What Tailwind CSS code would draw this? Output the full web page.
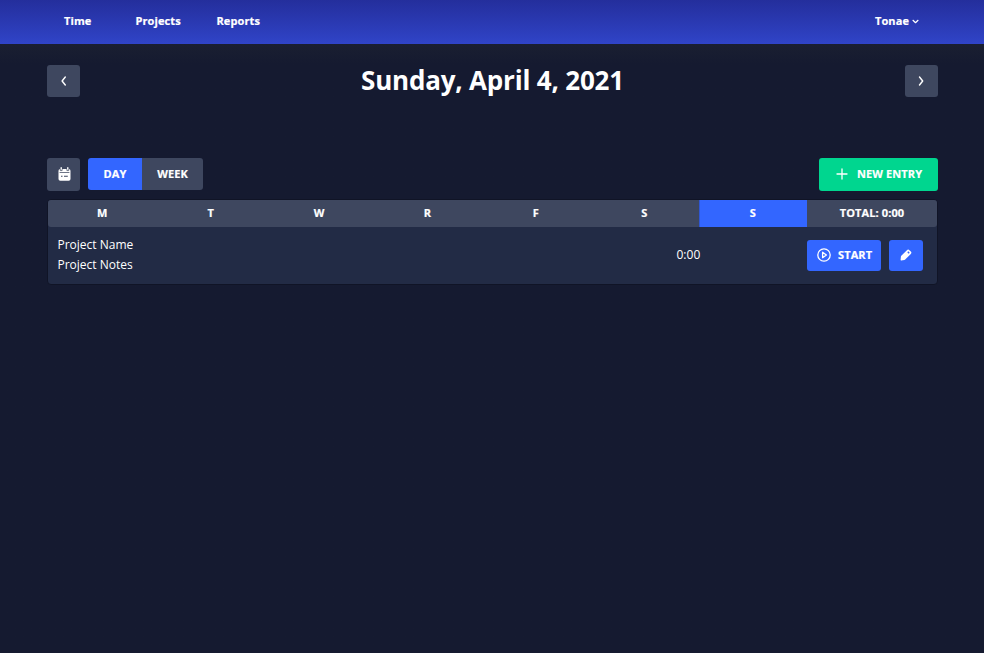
<!DOCTYPE html>
<html lang="en">
<head>
<meta charset="utf-8">
<title>Time</title>
<script src="https://cdn.jsdelivr.net/npm/@tailwindcss/browser@4"></script>
</head>
<body class="h-screen overflow-hidden bg-[#151a30] font-['Open_Sans',sans-serif] text-white">
<nav class="flex h-[44px] items-center justify-between bg-linear-to-b from-[#242e9c] to-[#3044c8] pr-[65px] pl-[64px] pb-[2px] text-[11px] leading-4 font-bold tracking-[0.1px] [-webkit-text-stroke:0.2px_white]">
  <div class="flex">
    <a class="w-[71.5px]">Time</a>
    <a class="w-[81px]">Projects</a>
    <a>Reports</a>
  </div>
  <div class="flex items-center gap-[3px]">Tonae
    <svg class="mt-px h-[7px] w-[7px]" viewBox="0 0 7 7" fill="none" stroke="white" stroke-width="1.2" stroke-linecap="round" stroke-linejoin="round"><path d="M1 2.3 3.5 4.7 6 2.3"/></svg>
  </div>
</nav>
<div class="h-[609px] bg-linear-to-b from-[#1a1f31] to-[#151a30] to-[20px] pt-[21px] pr-[46px] pl-[47px]">
  <div class="flex h-8 items-center justify-between">
    <button class="flex h-8 w-[33px] items-center justify-center rounded-[3px] bg-[#3e475f]">
      <svg class="h-3 w-3" viewBox="0 0 12 12" fill="none" stroke="white" stroke-width="1.4" stroke-linecap="round" stroke-linejoin="round"><path d="M7.3 2 4.1 6l3.2 4"/></svg>
    </button>
    <h1 class="pb-[2px] text-[26px] leading-8 font-bold tracking-[-0.19px]">Sunday, April 4, 2021</h1>
    <button class="flex h-8 w-[33px] items-center justify-center rounded-[3px] bg-[#3e475f]">
      <svg class="h-3 w-3" viewBox="0 0 12 12" fill="none" stroke="white" stroke-width="1.4" stroke-linecap="round" stroke-linejoin="round"><path d="M4.5 2l3.2 4-3.2 4"/></svg>
    </button>
  </div>
  <div class="mt-[61px] flex h-[33px] items-start text-[11px] leading-4 font-bold tracking-[0.1px] [-webkit-text-stroke:0.2px_white]">
    <button class="flex h-[33px] w-[33px] items-center justify-center rounded-[3px] bg-[#3e475f] pb-px pl-px">
      <svg class="h-[14px] w-[13px]" viewBox="0 0 13 14"><path fill="white" fill-rule="evenodd" d="M.5 3.8Q.5 2 2.3 2H2.5V.8Q2.5 .1 3.2 .1T3.9 .8V2H9.1V.8Q9.1 .1 9.8 .1T10.5 .8V2H10.7Q12.5 2 12.5 3.8V12Q12.5 13.8 10.7 13.8H2.3Q.5 13.8 .5 12ZM1.6 5.2V6H11.4V5.2Z"/><path stroke="#3e475f" stroke-width="1.1" d="M3 9.3H4.5M6 9.3H9.8"/><path stroke="#3e475f" stroke-width=".7" d="M2.3 2v1.6H4.1V2M8.9 2v1.6h1.8V2" fill="none"/></svg>
    </button>
    <div class="ml-2 flex h-8 overflow-hidden rounded-[3px]">
      <button class="w-[54px] bg-[#3366ff]">DAY</button>
      <button class="w-[61px] bg-[#3e475f]">WEEK</button>
    </div>
    <button class="ml-auto flex h-[33px] w-[119px] items-center rounded-[3px] bg-[#00d68f] pb-px pl-[17px]">
      <svg class="mr-[9px] h-3 w-3" viewBox="0 0 12 12" stroke="white" stroke-width="1.3" stroke-linecap="round"><path d="M6 1v10M1 6h10"/></svg>
      NEW ENTRY
    </button>
  </div>
  <div class="mt-[8px] w-[891px] rounded-[4px] border border-[#101426] bg-[#222b45]">
    <div class="flex h-[27px] overflow-hidden rounded-[3px] bg-[#3e475f] text-center text-[11px] leading-[25px] font-bold tracking-[0.1px] [-webkit-text-stroke:0.2px_white]">
      <div class="grid w-[759px] grid-cols-7">
        <div>M</div><div>T</div><div>W</div><div>R</div><div>F</div><div>S</div>
        <div class="border-l border-[#3057d2] bg-[#3366ff] pr-px">S</div>
      </div>
      <div class="w-[130px]">TOTAL: 0:00</div>
    </div>
    <div class="flex h-[57px] items-center pr-[14px] pl-[9.5px] text-[12px] leading-5">
      <div class="w-[619px] pb-[2px]"><div>Project Name</div><div>Project Notes</div></div>
      <div class="pb-[2px]">0:00</div>
      <button class="ml-auto flex h-[31px] w-[74px] items-center rounded-[3px] bg-[#3366ff] pl-[10px] text-[11px] font-bold tracking-[0.1px] [-webkit-text-stroke:0.2px_white]">
        <svg class="mr-[7px] mb-px h-[14px] w-[14px]" viewBox="0 0 14 14" fill="none" stroke="white" stroke-width="1.3" stroke-linejoin="round"><circle cx="7" cy="7" r="6.2"/><path d="M5.6 4.3v5.4L9.4 7z"/></svg><span class="pb-[2px]">START</span>
      </button>
      <button class="ml-2 flex h-[31px] w-[34px] items-center justify-center rounded-[3px] bg-[#3366ff] pb-px">
        <svg class="h-[12px] w-[12px]" viewBox="0 0 12 12"><path fill="white" fill-rule="evenodd" d="M.6 10.8 .9 7.6Q1 7.1 1.3 6.8L6.9 1.2Q8.2 0 9.4 1.2L10.8 2.6Q12 3.8 10.8 5L5.2 10.6Q4.9 10.9 4.4 11L1.2 11.4Q.5 11.5.6 10.8ZM8.3 2.3 7.3 3.3 8.7 4.7 9.7 3.7Z"/></svg>
      </button>
    </div>
  </div>
</div>
</body>
</html>
